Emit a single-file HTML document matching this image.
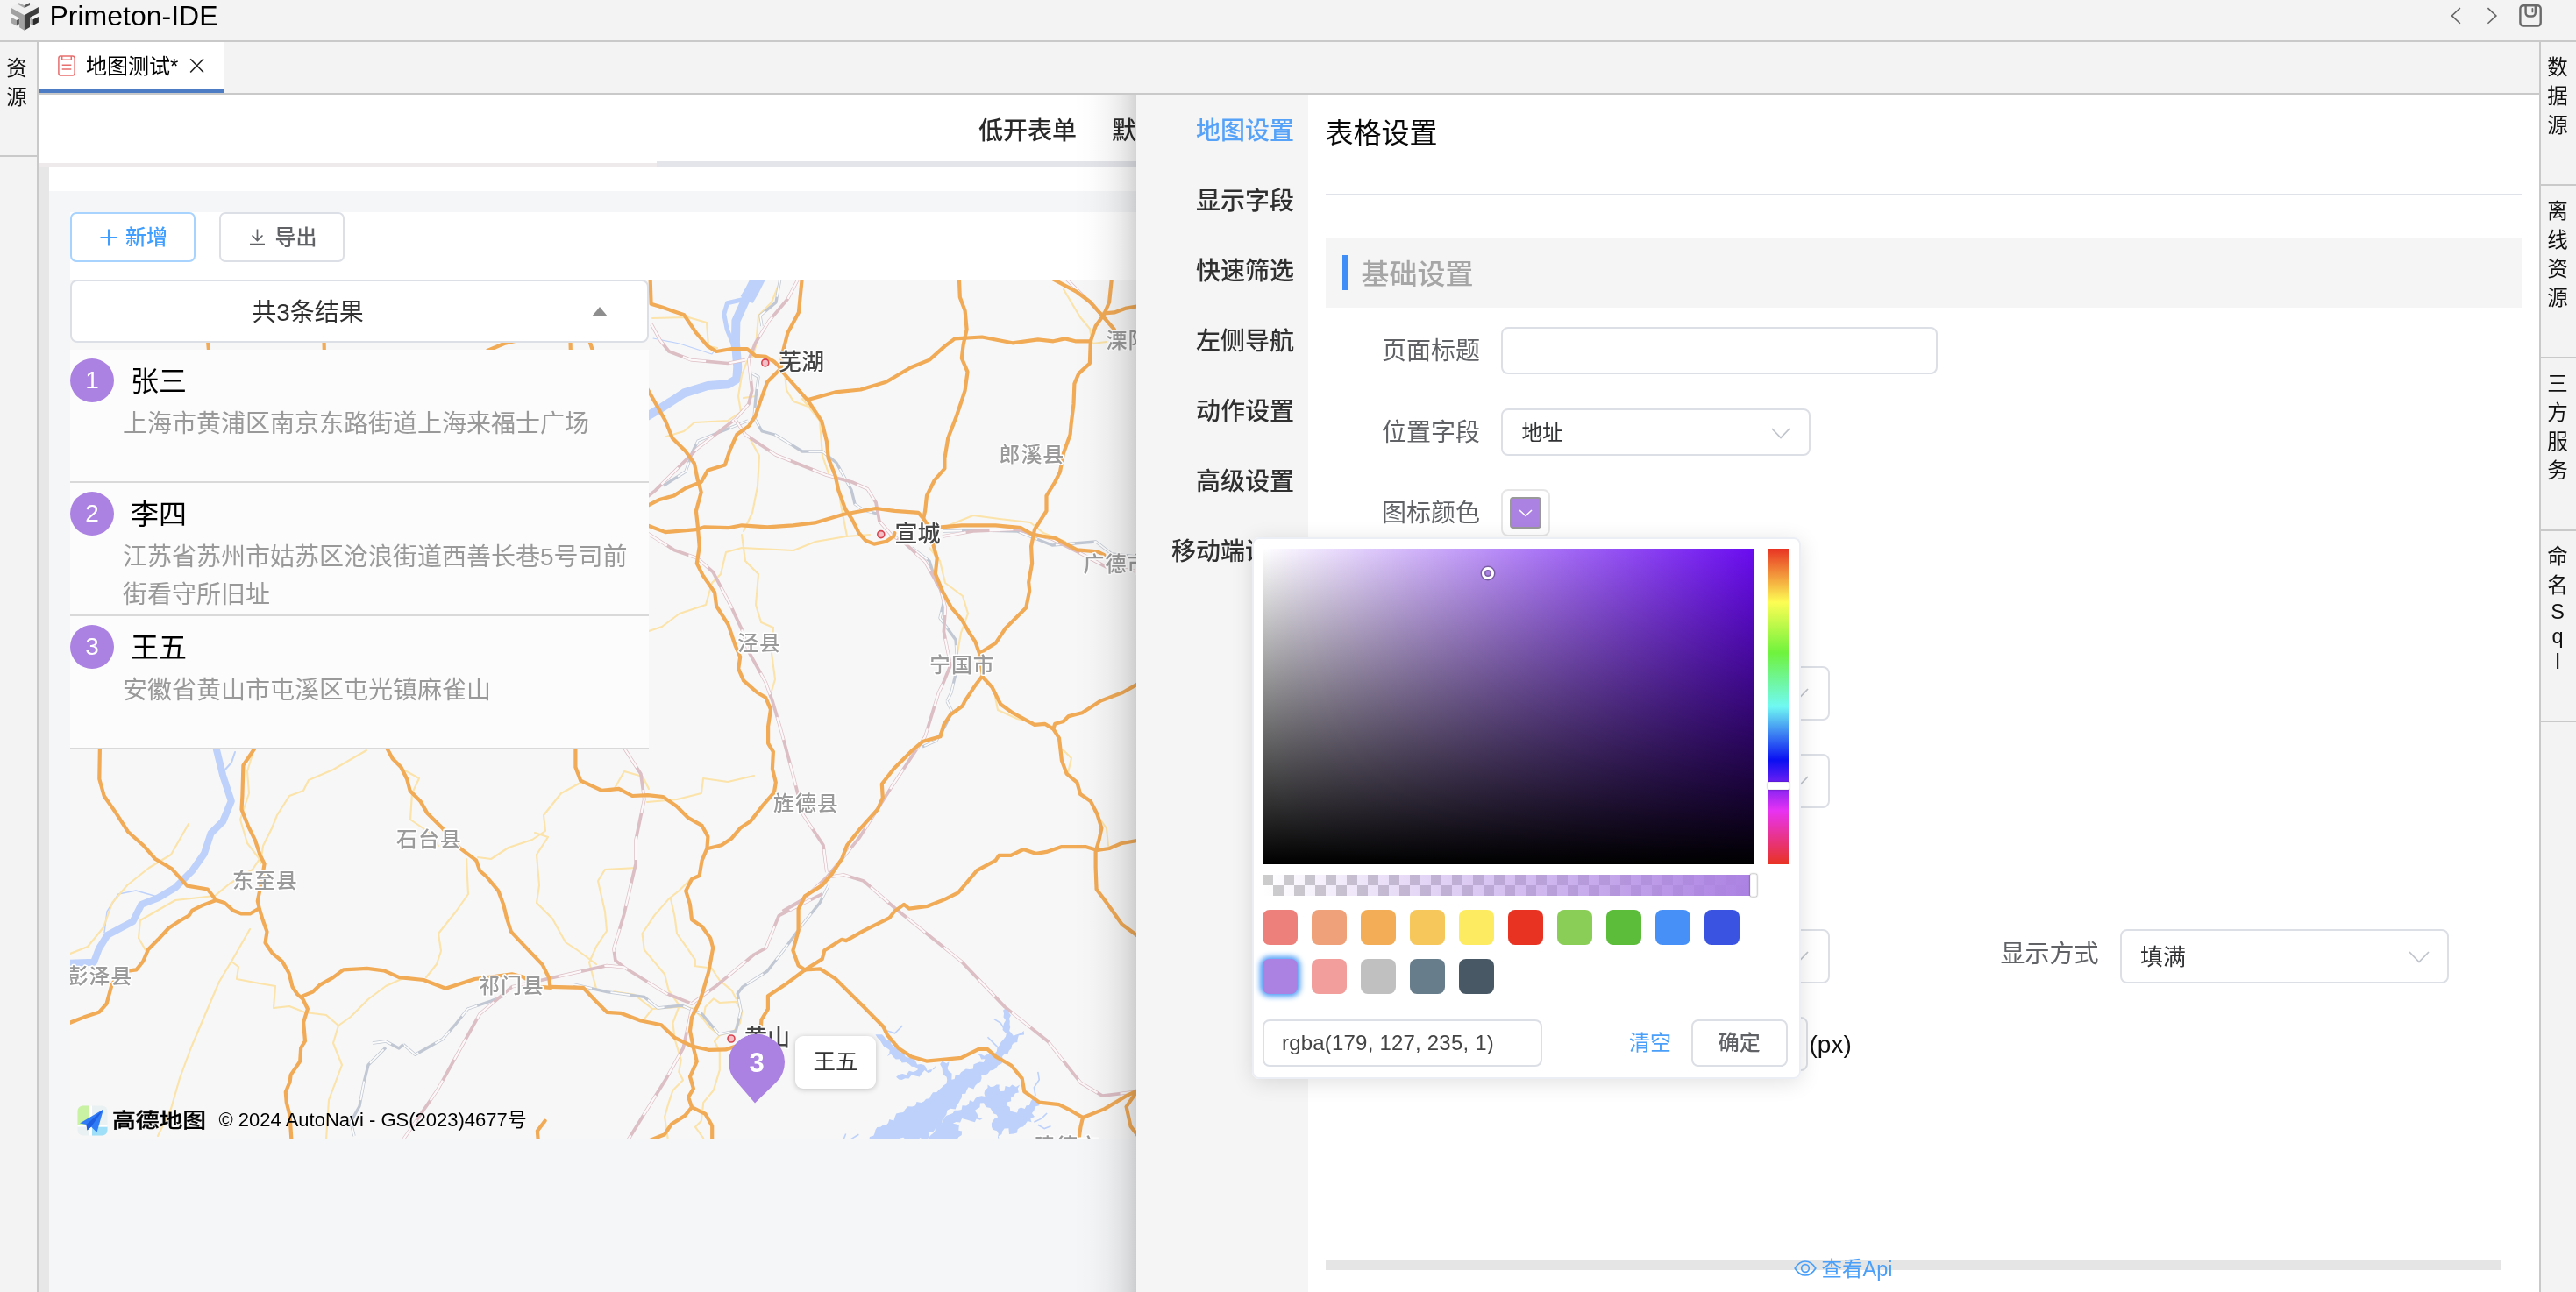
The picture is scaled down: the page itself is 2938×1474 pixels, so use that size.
<!DOCTYPE html>
<html lang="zh-CN">
<head>
<meta charset="utf-8">
<title>Primeton-IDE</title>
<style>
*{box-sizing:border-box;margin:0;padding:0}
html,body{width:2938px;height:1474px;overflow:hidden;background:#f3f3f3}
body{position:relative;font-family:"Liberation Sans","Noto Sans CJK SC",sans-serif;color:#000;-webkit-font-smoothing:antialiased}
#root{position:absolute;left:0;top:0;width:2938px;height:1474px;will-change:transform}
@media (max-width:1600px){html,body{width:1469px;height:737px}#root{transform:scale(.5);transform-origin:0 0}}
.abs{position:absolute}
.t{position:absolute;white-space:nowrap;line-height:1}
/* ---------- IDE chrome ---------- */
#topbar{left:0;top:0;width:2938px;height:46px;background:#f3f3f3}
#topline{left:0;top:46px;width:2938px;height:2px;background:#c9c9c9}
#title{left:56.5px;top:0px;font-size:32px;line-height:36px;color:#000}
#lside{left:0;top:48px;width:42px;height:1426px;background:#f3f3f3}
#lsideline{left:42px;top:48px;width:2px;height:1426px;background:#c9c9c9}
#rside{left:2898px;top:48px;width:40px;height:1426px;background:#f3f3f3}
#rsideline{left:2896px;top:48px;width:2px;height:1426px;background:#c9c9c9}
.vtxt{position:absolute;width:40px;text-align:center;font-size:23.5px;line-height:33px;color:#111}
.hsep{position:absolute;height:2px;background:#c9c9c9}
#tabbar{left:44px;top:48px;width:2852px;height:58px;background:#f3f3f3}
#tab{left:44px;top:48px;width:212px;height:58px;background:#fff}
#tabblue{left:44px;top:102px;width:212px;height:4px;background:#4d7cc4}
#tabline{left:44px;top:106px;width:2852px;height:2px;background:#c9c9c9}
#tabtxt{left:98px;top:62px;font-size:24px;line-height:28px;color:#000}
/* ---------- page ---------- */
#page{left:44px;top:108px;width:2852px;height:1366px;background:#f5f6f8;overflow:hidden}
#phead{left:0;top:0;width:2852px;height:82px;background:#fff}
#pline1{left:0;top:78px;width:706px;height:4px;background:#eeeaeb}
#pline2{left:705px;top:76px;width:2147px;height:6px;background:#e4e5eb}
#pwhite{left:12px;top:82px;width:2840px;height:28px;background:#fff}
#pstrip{left:0;top:82px;width:12px;height:1284px;background:#e7e7e7}
#card{left:36px;top:134px;width:2816px;height:77px;background:#fff}
.btn{position:absolute;top:134px;height:57px;width:143px;border-radius:7px;border:2px solid #dcdfe6;background:#fff;font-size:24px}
#map{left:36px;top:211px;width:1216px;height:981px;overflow:hidden;background:#f7f7f7}
.mapsvg{position:absolute;left:0;top:0}
.or{fill:none;stroke:#f1aa56;stroke-width:4.2;stroke-linejoin:round;stroke-linecap:round}
.yl{fill:none;stroke:#fbe3a9;stroke-width:2.1;stroke-linejoin:round;stroke-linecap:round}
.rl{fill:none;stroke:#dcbec5;stroke-width:3.7;stroke-linejoin:round}
.rld{fill:none;stroke:#fcf8f9;stroke-width:2.3;stroke-dasharray:27 27;stroke-linejoin:round}
.gr{fill:none;stroke:#c1c8d3;stroke-width:3.3;stroke-linejoin:round}
.grd{fill:none;stroke:#fbfbfb;stroke-width:1.8;stroke-dasharray:22 22;stroke-linejoin:round}
.rv{fill:none;stroke:#bdd1fb;stroke-linejoin:round;stroke-linecap:round}
.ml{font-family:"Liberation Sans","Noto Sans CJK SC",sans-serif;font-size:24px;letter-spacing:.9px;font-weight:500;fill:#9a9a9a;stroke:#fff;stroke-width:3px;paint-order:stroke;stroke-linejoin:round}
.mc{font-family:"Liberation Sans","Noto Sans CJK SC",sans-serif;font-size:26px;font-weight:500;fill:#454545;stroke:#fff;stroke-width:3px;paint-order:stroke;stroke-linejoin:round}
#panel{left:36px;top:211px;width:660px;height:72px;background:#fff;border:2px solid #dcdfe6;border-radius:8px}
.item{position:absolute;left:36px;width:660px;height:152px;background:#fcfcfc;border-bottom:2px solid #d9d9d9}
.num{position:absolute;left:0;top:10px;width:50px;height:50px;border-radius:50%;background:#ab81e2;color:#fff;font-size:28px;line-height:50px;text-align:center}
.nm{position:absolute;left:69px;top:16px;font-size:32px;line-height:40px;color:#000;white-space:nowrap}
.ad{position:absolute;left:60px;top:62.5px;width:590px;font-size:28px;line-height:43.5px;color:#999}
/* ---------- drawer ---------- */
#dshadow{left:1224px;top:108px;width:72px;height:1366px;background:linear-gradient(to right,rgba(0,0,0,0) 0%,rgba(0,0,0,.012) 30%,rgba(0,0,0,.04) 55%,rgba(0,0,0,.08) 75%,rgba(0,0,0,.125) 90%,rgba(0,0,0,.17) 100%)}
#drawer{left:1296px;top:108px;width:1600px;height:1366px;background:#fff;overflow:hidden}
#dnav{left:0;top:0;width:196px;height:1366px;background:#f5f5f5}
.nav{position:absolute;margin-top:2px;right:1420px;font-size:28px;line-height:40px;color:#303030;white-space:nowrap;font-weight:500}
#dtitle{left:215.5px;top:23.5px;font-size:32px;line-height:40px;color:#080808}
#dsep{left:216px;top:113px;width:1364px;height:2px;background:#dfe2e8}
#dsec{left:216px;top:163px;width:1364px;height:80px;background:#f5f5f5}
#dsecbar{left:235px;top:183px;width:7px;height:40px;background:#3f8ef7}
#dsectxt{left:256.5px;top:185px;font-size:32px;line-height:40px;color:#a6a6a6;font-weight:500}
.lbl{position:absolute;margin-top:1px;font-size:28px;line-height:40px;color:#606266;white-space:nowrap}
.inp{position:absolute;border:2px solid #dcdfe6;border-radius:8px;background:#fff}
.seltxt{position:absolute;left:21px;top:50%;margin-top:-16px;font-size:23.5px;line-height:34px;color:#303133;white-space:nowrap}
/* ---------- colour picker ---------- */
#cp{left:1428px;top:613px;width:625.5px;height:618px;background:#fff;border-radius:8px;box-shadow:inset 0 0 0 2px #ebeef5,0 4px 24px rgba(0,0,0,.12)}
.sw{position:absolute;width:40px;height:40px;border-radius:8px}
</style>
</head>
<body>
<div id="root">
<!-- ================= IDE chrome ================= -->
<div class="abs" id="topbar"></div>
<div class="abs" id="topline"></div>
<svg class="abs" style="left:6px;top:0" width="46" height="40" viewBox="6 0 46 40">
  <polygon points="12,8.4 21.2,3.6 21.2,5.6 27.7,9 34,5.9 34,3.4 43.9,8.1 27.8,17.3" fill="#efefef"/>
  <polygon points="21.2,3.1 27.7,6.2 27.7,9 21.2,5.6" fill="#a9a9a9"/>
  <polygon points="27.7,6.2 34,2.9 34,5.9 27.7,9" fill="#555"/>
  <polygon points="12,8.4 27.8,17.3 27.8,34.7 22.1,31.3 22.1,20.4 12,14.9" fill="#a1a1a1"/>
  <polygon points="27.8,17.3 43.9,8.1 43.9,14.9 34,20.1 34,31 27.8,34.7" fill="#3d3d3d"/>
  <polygon points="12,19.2 15.3,17.6 21.9,21.4 19,22.9" fill="#f6f6f6"/>
  <polygon points="12,19.2 19,22.9 19,29.4 12,25.7" fill="#a4a4a4"/>
  <polygon points="19,22.9 21.9,21.4 21.9,27.2 19,29.4" fill="#555"/>
  <polygon points="34.3,20.4 40,17.4 43.9,18.9 37.6,22.3" fill="#f6f6f6"/>
  <polygon points="34.3,20.4 37.6,22.3 37.6,29.1 34.3,27.2" fill="#ababab"/>
  <polygon points="37.6,22.3 43.9,18.9 43.9,25.4 37.6,29.1" fill="#2b2b2b"/>
</svg>

<div class="t" id="title">Primeton-IDE</div>
<svg class="abs" style="left:2790px;top:0" width="120" height="40" viewBox="2790 0 120 40" fill="none" stroke-linecap="square">
  <polyline points="2805.3,9.6 2796.4,17.9 2805.3,26.2" stroke="#666" stroke-width="1.6"/>
  <polyline points="2838,9.6 2846.9,17.9 2838,26.2" stroke="#666" stroke-width="1.6"/>
  <rect x="2874.400" y="6.300" width="23.300" height="23.300" rx="3.500" stroke="#6a6a6a" stroke-width="2.400"/>
  <path d="M2880.600 6.500v8a4 4 0 0 0 4 4h3.200a4 4 0 0 0 4-4v-8" stroke="#6a6a6a" stroke-width="2.400" stroke-linecap="butt"/>
  <path d="M2888.400 9.800v3.600" stroke="#6a6a6a" stroke-width="1.800" stroke-linecap="round"/>
</svg>

<div class="abs" id="lside"></div>
<div class="abs" id="lsideline"></div>
<div class="abs" id="rside"></div>
<div class="abs" id="rsideline"></div>
<div class="abs" id="tabbar"></div>
<div class="abs" id="tab"></div>
<div class="abs" id="tabblue"></div>
<div class="abs" id="tabline"></div>
<div class="t" id="tabtxt">地图测试*</div>
<svg class="abs" style="left:60px;top:58px" width="34" height="34" viewBox="60 58 34 34" fill="none" stroke="#e76f6e" stroke-width="1.500">
  <rect x="66.900" y="63.900" width="18.200" height="22.200" rx="2.500"/>
  <path d="M70.700 64v4.200h10.600V64M70.700 74.300h10.600M70.700 78.900h10.600"/>
</svg>
<svg class="abs" style="left:212px;top:62px" width="26" height="26" viewBox="212 62 26 26"><path d="M217.200 67.300l14.800 15.200M232 67.300l-14.800 15.200" stroke="#222" stroke-width="1.600" fill="none"/></svg>

<div class="vtxt" style="left:-1px;top:61.5px">资<br>源</div>
<div class="hsep" style="left:0;top:177px;width:42px"></div>
<div class="vtxt" style="left:2897px;top:61px">数<br>据<br>源</div>
<div class="hsep" style="left:2898px;top:210px;width:40px"></div>
<div class="vtxt" style="left:2897px;top:225px">离<br>线<br>资<br>源</div>
<div class="hsep" style="left:2898px;top:407px;width:40px"></div>
<div class="vtxt" style="left:2897px;top:422px">三<br>方<br>服<br>务</div>
<div class="hsep" style="left:2898px;top:604px;width:40px"></div>
<div class="vtxt" style="left:2897px;top:619px">命<br>名<div style="line-height:28.6px;margin-top:-1.5px">S<br>q<br>l</div></div>
<div class="hsep" style="left:2898px;top:822px;width:40px"></div>
<!-- ================= page ================= -->
<div class="abs" id="page">
<div class="abs" id="phead"></div>
<div class="t" style="left:1072px;top:22px;font-size:28px;line-height:40px;color:#2a2a2a;font-weight:500">低开表单</div>
<div class="t" style="left:1224px;top:22px;font-size:28px;line-height:40px;color:#2a2a2a;font-weight:500">默认</div>
<div class="abs" id="pline1"></div>
<div class="abs" id="pline2"></div>
<div class="abs" id="pwhite"></div>
<div class="abs" id="pstrip"></div>
<div class="abs" id="card"></div>
<div class="btn" style="left:36px;border-color:#a9d3ff">
  <svg class="abs" style="left:32px;top:17px" width="20" height="20" viewBox="0 0 20 20"><path d="M10 0.5v19M0.5 10h19" stroke="#409eff" stroke-width="2" fill="none"/></svg>
  <div class="t" style="left:61px;top:13px;line-height:28px;color:#409eff;font-weight:500">新增</div>
</div>
<div class="btn" style="left:206px">
  <svg class="abs" style="left:32px;top:17px" width="19" height="19" viewBox="0 0 19 19"><path d="M9.5 0.5v12.5M3.5 7.5l6 6 6-6M1 17.6h17" stroke="#606266" stroke-width="1.7" fill="none"/></svg>
  <div class="t" style="left:61.5px;top:13px;line-height:28px;color:#606266;font-weight:500">导出</div>
</div>
<div class="abs" id="map">
<svg class="mapsvg" width="1216" height="981" viewBox="80 319 1216 981">
<rect x="80" y="319" width="1216" height="981" fill="#f7f7f7"/>
<polyline class="rv" style="stroke-width:10" points="863.5,317.0 850.0,342.9 839.4,366.1 838.9,391.3 841.3,418.4 840.3,432.5 830.6,438.2 807.4,440.0 780.3,448.4 755.2,464.8 738.0,475.0"/>
<polyline class="rv" style="stroke-width:16;stroke-linecap:butt" points="866,315 858,331 851.5,342"/>
<polyline class="rv" style="stroke-width:5" points="850,341 829.5,345.8 825.8,358.4 829.2,375.8 835.5,391.3 838.4,402.9"/>
<polyline class="rv" style="stroke-width:1.2" points="745,386 775,392 812,404 816,398"/>
<polyline class="rv" style="stroke-width:8" points="246.4,853.0 254.2,884.8 263.8,913.9 254.2,937.1 240.6,950.6 232.9,973.9 219.3,993.2 200.0,1012.6 180.6,1024.2 161.3,1031.9 151.6,1051.3 122.6,1066.7 112.9,1082.2 107.1,1097.7 78.0,1098.7"/>
<polyline class="rv" style="stroke-width:2" points="268,858 264,870 255,880"/>
<polyline class="rv" style="stroke-width:1.5" points="176,1022 155,1016 135,1020 122,1040 119,1064"/>
<polygon fill="#bdd1fb" points="998.5,1180.3 1002.3,1180.3 1006.0,1180.2 1008.8,1183.2 1010.8,1186.4 1015.8,1186.6 1016.4,1191.1 1019.1,1193.5 1022.3,1195.3 1026.2,1196.3 1027.0,1200.6 1031.5,1200.9 1032.4,1205.3 1035.5,1206.4 1039.4,1205.9 1042.3,1207.5 1044.3,1210.8 1046.2,1214.4 1050.0,1214.1 1054.0,1215.0 1056.1,1217.8 1057.4,1221.5 1061.2,1220.2 1065.5,1219.9 1067.6,1215.6 1064.3,1219.0 1061.8,1222.9 1058.4,1224.0 1054.5,1221.1 1051.5,1224.4 1048.8,1228.4 1044.1,1227.4 1039.7,1226.2 1036.6,1230.5 1032.4,1230.3 1028.6,1231.9 1025.2,1231.6 1022.1,1228.8 1025.2,1226.0 1029.4,1225.1 1033.7,1226.3 1036.9,1221.8 1041.2,1222.9 1044.3,1221.9 1047.1,1220.0 1044.0,1217.3 1039.8,1216.7 1036.8,1214.1 1033.5,1211.9 1028.6,1212.5 1026.5,1208.2 1021.7,1208.6 1018.7,1205.8 1016.2,1202.4 1011.8,1205.3 1014.2,1202.0 1014.7,1197.9 1011.5,1195.8 1008.1,1193.9 1005.9,1190.6 1003.8,1186.9 1000.8,1183.9"/>
<polygon fill="#bdd1fb" points="991.2,1300.6 992.0,1297.1 996.3,1295.8 997.7,1292.6 998.5,1289.1 1000.4,1286.0 1004.3,1285.8 1006.9,1283.7 1010.8,1283.6 1013.1,1281.1 1014.4,1277.0 1019.4,1278.6 1020.6,1274.4 1022.2,1270.4 1026.2,1269.6 1030.3,1269.0 1032.4,1265.6 1035.5,1262.2 1040.2,1262.6 1044.1,1261.2 1045.5,1256.9 1050.6,1258.1 1053.8,1256.6 1056.1,1253.7 1060.1,1253.2 1061.8,1249.4 1064.0,1246.3 1068.4,1245.9 1070.9,1243.2 1073.8,1241.0 1076.3,1238.2 1079.4,1236.2 1080.2,1232.2 1079.7,1228.7 1076.0,1226.3 1075.0,1222.9 1074.5,1218.2 1072.1,1214.1 1074.8,1210.6 1079.3,1213.3 1082.4,1211.2 1082.0,1214.7 1080.4,1218.5 1081.9,1221.7 1085.6,1224.7 1085.5,1228.2 1085.3,1231.8 1088.7,1231.0 1089.8,1225.9 1094.0,1226.5 1096.1,1223.3 1098.9,1221.4 1101.6,1219.4 1105.9,1220.0 1109.7,1219.4 1110.5,1214.2 1113.9,1212.9 1117.3,1211.6 1121.8,1212.1 1123.5,1208.2 1119.2,1208.4 1117.5,1204.6 1114.7,1202.4 1118.6,1202.6 1122.5,1204.7 1126.5,1202.4 1130.4,1203.2 1133.9,1202.5 1136.8,1199.4 1137.4,1195.5 1140.0,1192.5 1141.5,1189.1 1144.1,1186.2 1146.9,1182.8 1147.8,1179.2 1143.5,1174.9 1144.2,1171.2 1145.0,1167.6 1147.1,1164.1 1144.5,1160.6 1145.0,1156.3 1144.1,1152.4 1148.5,1149.4 1148.5,1152.7 1150.9,1155.6 1152.9,1158.5 1151.0,1162.1 1151.8,1165.2 1151.5,1168.5 1152.2,1172.0 1151.1,1176.0 1153.7,1178.8 1155.9,1181.8 1158.9,1180.4 1162.1,1179.5 1165.2,1178.3 1167.6,1175.9 1168.1,1180.5 1161.9,1181.3 1160.7,1185.0 1160.3,1189.1 1156.3,1189.7 1154.2,1192.2 1153.4,1196.2 1150.9,1198.4 1149.6,1201.9 1145.6,1202.4 1143.0,1205.3 1144.2,1210.2 1142.3,1213.5 1138.2,1215.6 1135.9,1218.8 1132.8,1220.8 1129.1,1221.6 1126.8,1224.8 1123.7,1226.8 1119.1,1225.9 1119.6,1230.1 1118.4,1233.7 1114.7,1236.2 1112.2,1238.8 1110.4,1242.5 1104.6,1240.2 1102.6,1243.5 1101.2,1247.7 1097.1,1247.9 1096.9,1251.9 1095.0,1254.9 1093.4,1258.2 1091.2,1261.2 1089.7,1265.5 1083.9,1264.7 1080.4,1266.7 1079.4,1271.5 1077.2,1274.5 1074.8,1277.4 1074.3,1281.8 1071.9,1284.7 1067.6,1286.2 1065.9,1289.3 1063.7,1292.0 1058.9,1292.0 1059.3,1297.2 1057.4,1300.2 1052.9,1300.6 1049.7,1297.9 1046.4,1300.4 1043.2,1302.7 1039.9,1300.3 1036.7,1303.4 1033.4,1300.4 1030.2,1297.7 1026.9,1298.4 1023.7,1299.4 1020.4,1302.0 1017.2,1301.4 1013.9,1302.6 1010.7,1299.0 1007.4,1300.4 1004.2,1298.9 1000.9,1301.6 997.7,1302.2 994.4,1298.7"/>
<polygon fill="#bdd1fb" points="1052.9,1300.6 1057.4,1300.5 1059.4,1297.6 1061.7,1295.1 1064.3,1292.9 1066.5,1290.3 1067.0,1285.8 1070.6,1284.7 1073.4,1282.3 1075.4,1279.2 1076.8,1275.3 1079.5,1272.8 1083.2,1271.5 1086.8,1270.0 1088.6,1266.8 1092.9,1266.7 1096.6,1265.9 1097.5,1261.3 1102.0,1261.6 1104.9,1259.7 1105.9,1255.3 1110.1,1257.1 1112.7,1252.7 1116.1,1251.0 1119.6,1250.2 1123.5,1250.9 1122.5,1247.2 1123.3,1243.9 1126.5,1241.1 1126.5,1237.6 1129.8,1240.0 1133.1,1239.7 1136.4,1237.5 1139.7,1237.6 1139.5,1241.5 1141.2,1245.0 1145.4,1244.7 1146.6,1239.1 1151.6,1240.3 1154.4,1237.6 1158.8,1240.1 1163.2,1237.6 1160.8,1241.8 1161.8,1246.5 1158.0,1247.2 1156.0,1250.5 1152.9,1252.4 1153.2,1256.2 1148.4,1257.5 1148.5,1261.2 1151.7,1262.9 1152.2,1267.4 1155.9,1268.5 1160.1,1269.6 1161.5,1265.0 1164.4,1263.6 1168.8,1265.0 1170.6,1261.2 1174.1,1260.9 1175.6,1256.5 1178.4,1254.8 1182.4,1255.3 1185.7,1257.3 1185.3,1261.2 1180.6,1262.4 1179.4,1267.1 1176.9,1270.0 1180.0,1274.1 1175.3,1276.6 1176.5,1280.3 1172.0,1279.1 1169.5,1282.4 1166.9,1285.5 1163.2,1286.2 1160.6,1288.4 1159.9,1292.6 1155.9,1293.5 1151.0,1294.1 1150.4,1287.2 1145.6,1287.6 1143.3,1290.5 1142.5,1294.1 1138.8,1296.3 1139.7,1300.6 1137.9,1297.6 1138.8,1293.4 1137.1,1290.3 1132.3,1288.8 1131.0,1285.5 1130.9,1281.8 1132.5,1278.4 1134.7,1275.8 1138.2,1274.4 1136.4,1271.5 1132.7,1270.2 1131.2,1267.0 1129.4,1264.1 1124.4,1262.9 1122.1,1258.2 1117.9,1258.6 1117.5,1263.3 1114.5,1265.0 1111.8,1267.1 1114.4,1270.4 1115.9,1274.7 1120.6,1275.9 1117.9,1277.8 1113.6,1276.6 1111.8,1280.3 1108.1,1279.2 1104.5,1277.9 1100.8,1276.9 1097.1,1275.9 1095.1,1280.4 1090.4,1280.1 1086.8,1281.8 1090.6,1282.5 1093.8,1283.9 1093.3,1289.7 1097.1,1290.6 1096.8,1294.9 1093.3,1297.3 1091.2,1300.6 1087.7,1299.2 1084.2,1300.2 1080.7,1301.6 1077.3,1300.5 1073.8,1300.3 1070.3,1298.9 1066.8,1303.0 1063.4,1300.2 1059.9,1302.1 1056.4,1301.9"/>
<polyline fill="none" stroke="#bdd1fb" stroke-width="1.6" points="1176.5,1256.8 1180.9,1249.4 1179.4,1240.6 1185.3,1231.8 1183.8,1222.9"/>
<polyline fill="none" stroke="#bdd1fb" stroke-width="1.6" points="1179.4,1280.3 1188.2,1275.9 1194.1,1270.0"/>
<polyline fill="none" stroke="#bdd1fb" stroke-width="1.6" points="1183.8,1283.2 1191.2,1287.6 1198.5,1284.7"/>
<polyline fill="none" stroke="#bdd1fb" stroke-width="1.6" points="961.8,1300.6 964.7,1293.5"/>
<polyline fill="none" stroke="#bdd1fb" stroke-width="1.6" points="969.1,1300.6 979.4,1294.3"/>
<polyline fill="none" stroke="#bdd1fb" stroke-width="1.6" points="1011.8,1175.9 1020.6,1178.8 1029.4,1170.0"/>
<polyline fill="none" stroke="#bdd1fb" stroke-width="1.6" points="1133.8,1162.6 1141.2,1167.1 1145.6,1174.4"/>
<polyline fill="none" stroke="#bdd1fb" stroke-width="1.6" points="1126.5,1183.2 1133.8,1190.6 1139.7,1196.5"/>
<polyline class="yl" points="80.0,1088.0 100.0,1080.0 118.0,1058.0 128.0,1030.0 145.0,1010.0 170.0,990.0 195.0,975.0 215.0,940.0"/>
<polyline class="yl" points="289.0,857.0 282.0,880.0 284.0,905.0 274.0,935.0 282.0,962.0 296.0,980.0 288.0,992.0 262.0,1008.0 245.0,1022.0 200.0,1027.0 160.0,1050.0 158.0,1070.0 166.0,1084.0"/>
<polyline class="yl" points="418.0,856.0 380.0,878.0 352.0,890.0 346.0,902.0 330.0,908.0 316.0,930.0 310.0,945.0 300.0,965.0 297.0,985.0"/>
<polyline class="yl" points="285.0,1060.0 265.0,1095.0 250.0,1120.0 235.0,1155.0 218.0,1195.0 205.0,1230.0 195.0,1265.0 180.0,1296.0"/>
<polyline class="yl" points="264.0,1097.0 272.0,1103.0 270.0,1117.0 296.0,1122.0 314.0,1125.0 312.0,1150.0 330.0,1148.0 348.0,1155.0 372.0,1158.0 386.0,1170.0 400.0,1160.0 420.0,1140.0 440.0,1125.0 460.0,1116.0"/>
<polyline class="yl" points="386.0,1170.0 380.0,1190.0 390.0,1215.0 375.0,1255.0 372.0,1300.0"/>
<polyline class="yl" points="460.0,878.0 478.0,888.0 470.0,905.0 468.0,935.0 490.0,950.0 500.0,965.0"/>
<polyline class="yl" points="545.0,978.0 560.0,980.0 580.0,967.0 607.0,958.0 622.0,948.0 620.0,930.0 640.0,905.0 662.0,893.0"/>
<polyline class="yl" points="610.0,950.0 625.0,955.0 612.0,975.0 615.0,1010.0 612.0,1030.0 630.0,1048.0 645.0,1075.0 660.0,1085.0 680.0,1100.0"/>
<polyline class="yl" points="532.0,980.0 534.0,1020.0 520.0,1040.0 500.0,1065.0 503.0,1085.0 498.0,1100.0 486.0,1115.0"/>
<polyline class="yl" points="726.0,990.0 690.0,992.0 682.0,1005.0 690.0,1040.0 692.0,1062.0 680.0,1080.0 672.0,1098.0 680.0,1128.0"/>
<polyline class="yl" points="700.0,901.0 712.0,880.0 733.0,886.0 740.0,900.0"/>
<polyline class="yl" points="738.0,915.0 772.0,912.0 800.0,905.0 802.0,888.0 830.0,892.0 860.0,885.0"/>
<polyline class="yl" points="744.0,363.0 785.0,362.0 806.0,368.0 808.0,395.0 818.0,397.0"/>
<polyline class="yl" points="760.0,498.0 780.0,492.0 792.0,482.0 830.0,480.0 845.0,470.0 842.0,452.0 846.0,428.0 852.0,412.0"/>
<polyline class="yl" points="865.0,430.0 862.0,452.0 848.0,454.0"/>
<polyline class="yl" points="890.0,320.0 880.0,345.0 865.0,360.0 862.0,395.0 858.0,408.0"/>
<polyline class="yl" points="895.0,425.0 897.0,445.0 905.0,458.0 925.0,465.0 935.0,478.0"/>
<polyline class="yl" points="915.0,455.0 935.0,480.0 938.0,520.0 945.0,540.0"/>
<polyline class="yl" points="855.0,500.0 866.0,520.0 864.0,555.0 858.0,585.0 848.0,606.0"/>
<polyline class="yl" points="846.0,610.0 850.0,640.0 865.0,655.0 862.0,690.0 868.0,710.0 882.0,716.0 880.0,745.0 884.0,775.0 878.0,795.0"/>
<polyline class="yl" points="740.0,720.0 755.0,715.0 775.0,700.0 805.0,690.0 812.0,665.0 822.0,655.0 828.0,630.0 846.0,625.0 905.0,628.0 930.0,618.0 965.0,612.0 992.0,610.0"/>
<polyline class="yl" points="958.0,570.0 966.0,612.0"/>
<polyline class="yl" points="1073.0,603.0 1110.0,588.0 1140.0,592.0 1175.0,596.0 1190.0,608.0 1215.0,618.0"/>
<polyline class="yl" points="1060.0,625.0 1072.0,640.0 1078.0,665.0 1098.0,680.0 1104.0,700.0 1096.0,722.0 1092.0,745.0"/>
<polyline class="yl" points="1213.0,330.0 1232.0,362.0 1243.0,375.0 1246.0,392.0 1262.0,390.0"/>
<polyline class="yl" points="1135.0,795.0 1138.0,810.0 1160.0,820.0 1178.0,824.0"/>
<polyline class="yl" points="1212.0,855.0 1222.0,865.0 1218.0,882.0"/>
<polyline class="yl" points="1248.0,925.0 1262.0,945.0 1264.0,965.0"/>
<polyline class="yl" points="789.4,1001.2 774.3,1016.3 762.7,1025.6 746.5,1044.1 732.5,1065.0 734.8,1083.6 746.5,1097.6 758.1,1111.5 762.7,1130.1 774.3,1146.3 790.6,1151.0"/>
<polyline class="yl" points="765.0,1025.6 769.7,1046.5 772.0,1065.0 783.6,1081.3 792.9,1095.2 792.9,1102.2 811.5,1104.5 820.8,1118.5 834.7,1130.1 839.4,1139.4"/>
<polyline class="yl" points="804.5,1148.7 813.8,1139.4 820.8,1144.0 839.4,1142.9 846.3,1153.3 844.0,1167.2 837.0,1176.5 820.8,1181.2 809.2,1171.9 802.2,1162.6 804.5,1148.7"/>
<polyline class="yl" points="820.8,1181.2 815.0,1188.2 820.8,1199.8 820.8,1220.7 813.8,1243.9 802.2,1257.8 799.9,1278.7 792.9,1285.7 802.2,1298.5"/>
<polyline class="yl" points="700.0,1131.2 723.2,1134.7 744.1,1151.0 774.3,1148.7 790.6,1151.0 802.2,1162.6"/>
<polyline class="yl" points="744.1,1151.0 734.8,1162.6"/>
<polyline class="yl" points="774.3,1148.7 767.4,1167.2 769.7,1185.8 776.7,1209.1 774.3,1223.0 779.0,1232.3 767.4,1243.9 762.7,1257.8 758.1,1274.1 761.6,1298.5"/>
<polyline class="gr" points="460.0,1191.6 473.5,1203.2 504.5,1185.8 520.0,1168.0 533.5,1151.0 560.0,1142.0 576.1,1135.5"/>
<polyline class="grd" points="460.0,1191.6 473.5,1203.2 504.5,1185.8 520.0,1168.0 533.5,1151.0 560.0,1142.0 576.1,1135.5"/>
<polyline class="gr" points="653.5,1122.9 692.2,1131.6 734.8,1137.4 750.3,1150.0 777.4,1147.1 800.6,1156.8 820.0,1180.0 839.3,1176.1 845.1,1152.9 841.2,1133.5 847.0,1125.8 875.0,1108.0 893.0,1085.0 915.0,1055.0 935.0,1030.0 945.0,1010.0"/>
<polyline class="grd" points="653.5,1122.9 692.2,1131.6 734.8,1137.4 750.3,1150.0 777.4,1147.1 800.6,1156.8 820.0,1180.0 839.3,1176.1 845.1,1152.9 841.2,1133.5 847.0,1125.8 875.0,1108.0 893.0,1085.0 915.0,1055.0 935.0,1030.0 945.0,1010.0"/>
<polyline class="gr" points="890.0,317.0 885.0,345.0 867.0,360.0 869.0,372.0"/>
<polyline class="grd" points="890.0,317.0 885.0,345.0 867.0,360.0 869.0,372.0"/>
<polyline class="gr" points="858.0,426.0 865.0,430.0 862.0,453.0 860.0,476.0 869.0,492.0 884.0,496.0 915.0,515.0 938.0,515.0 954.0,528.0 971.0,559.0 975.0,575.0 985.0,582.0 1000.0,586.0"/>
<polyline class="grd" points="858.0,426.0 865.0,430.0 862.0,453.0 860.0,476.0 869.0,492.0 884.0,496.0 915.0,515.0 938.0,515.0 954.0,528.0 971.0,559.0 975.0,575.0 985.0,582.0 1000.0,586.0"/>
<polyline class="gr" points="853.0,480.0 796.0,503.0 790.0,515.0 782.0,538.0 757.0,554.0"/>
<polyline class="grd" points="853.0,480.0 796.0,503.0 790.0,515.0 782.0,538.0 757.0,554.0"/>
<polyline class="gr" points="1040.0,625.0 1060.0,640.0 1068.0,665.0 1078.0,680.0 1072.0,705.0 1090.0,730.0 1092.0,760.0 1085.0,790.0 1080.0,800.0"/>
<polyline class="grd" points="1040.0,625.0 1060.0,640.0 1068.0,665.0 1078.0,680.0 1072.0,705.0 1090.0,730.0 1092.0,760.0 1085.0,790.0 1080.0,800.0"/>
<polyline class="gr" points="1080.0,800.0 1086.0,812.0 1078.0,828.0 1068.0,845.0 1052.0,852.0"/>
<polyline class="grd" points="1080.0,800.0 1086.0,812.0 1078.0,828.0 1068.0,845.0 1052.0,852.0"/>
<polyline class="gr" points="1075.0,606.0 1120.0,605.0 1160.0,606.0 1200.0,622.0 1250.0,618.0 1268.0,632.0 1298.0,635.0"/>
<polyline class="grd" points="1075.0,606.0 1120.0,605.0 1160.0,606.0 1200.0,622.0 1250.0,618.0 1268.0,632.0 1298.0,635.0"/>
<polyline class="gr" points="425.0,1190.0 440.0,1188.0 455.0,1196.0 460.0,1191.6"/>
<polyline class="grd" points="425.0,1190.0 440.0,1188.0 455.0,1196.0 460.0,1191.6"/>
<polyline class="gr" points="404.0,1296.0 400.0,1280.0 410.0,1262.0 415.0,1235.0 420.0,1215.0 440.0,1195.0"/>
<polyline class="grd" points="404.0,1296.0 400.0,1280.0 410.0,1262.0 415.0,1235.0 420.0,1215.0 440.0,1195.0"/>
<polyline class="rl" points="711.6,853.0 730.9,882.9 734.8,911.9 725.1,958.4 725.1,985.5 711.6,1043.5 700.0,1082.2 701.9,1095.8 711.6,1103.5"/>
<polyline class="rld" points="711.6,853.0 730.9,882.9 734.8,911.9 725.1,958.4 725.1,985.5 711.6,1043.5 700.0,1082.2 701.9,1095.8 711.6,1103.5"/>
<polyline class="rl" points="460.0,1300.0 498.7,1243.8 547.1,1156.8 583.9,1125.8 692.2,1101.6 711.6,1103.5 760.0,1133.5 789.0,1145.1 818.0,1123.9 860.0,1089.0 873.4,1081.7 888.3,1044.6 937.8,1019.8"/>
<polyline class="rld" points="460.0,1300.0 498.7,1243.8 547.1,1156.8 583.9,1125.8 692.2,1101.6 711.6,1103.5 760.0,1133.5 789.0,1145.1 818.0,1123.9 860.0,1089.0 873.4,1081.7 888.3,1044.6 937.8,1019.8"/>
<polyline class="rl" points="789.0,1151.0 779.3,1195.5 760.0,1230.3 715.4,1302.0"/>
<polyline class="rld" points="789.0,1151.0 779.3,1195.5 760.0,1230.3 715.4,1302.0"/>
<polyline class="rl" points="743.0,370.0 752.8,388.0 763.0,401.0 788.0,410.6 830.0,414.5 850.0,410.6"/>
<polyline class="rld" points="743.0,370.0 752.8,388.0 763.0,401.0 788.0,410.6 830.0,414.5 850.0,410.6"/>
<polyline class="rl" points="911.0,317.0 898.4,341.0 877.1,366.1 861.6,391.3 853.9,410.6 857.7,445.5 853.9,461.0 838.4,478.4 795.8,511.3 747.4,559.6 738.0,567.0"/>
<polyline class="rld" points="911.0,317.0 898.4,341.0 877.1,366.1 861.6,391.3 853.9,410.6 857.7,445.5 853.9,461.0 838.4,478.4 795.8,511.3 747.4,559.6 738.0,567.0"/>
<polyline class="rl" points="838.4,478.4 850.0,495.8 884.8,519.0 942.9,542.2 971.9,550.0 989.3,557.7 999.0,573.2 1002.9,594.5 1016.4,610.0 1031.9,619.7 1055.1,641.0 1072.5,671.9 1078.3,693.2 1076.4,720.3 1084.1,759.0 1074.5,782.2 1070.6,790.0 1055.1,840.3 1016.4,898.4 979.6,956.4 942.9,1000.9 915.8,1026.1 892.5,1039.6"/>
<polyline class="rld" points="838.4,478.4 850.0,495.8 884.8,519.0 942.9,542.2 971.9,550.0 989.3,557.7 999.0,573.2 1002.9,594.5 1016.4,610.0 1031.9,619.7 1055.1,641.0 1072.5,671.9 1078.3,693.2 1076.4,720.3 1084.1,759.0 1074.5,782.2 1070.6,790.0 1055.1,840.3 1016.4,898.4 979.6,956.4 942.9,1000.9 915.8,1026.1 892.5,1039.6"/>
<polyline class="rl" points="738.0,608.0 768.7,627.4 795.8,637.1 813.2,652.6 832.6,689.3 846.1,718.4 853.9,743.5 873.2,778.4 880.9,799.6 890.6,832.6 904.2,882.9 915.8,929.3 939.0,964.2 942.9,995.1"/>
<polyline class="rld" points="738.0,608.0 768.7,627.4 795.8,637.1 813.2,652.6 832.6,689.3 846.1,718.4 853.9,743.5 873.2,778.4 880.9,799.6 890.6,832.6 904.2,882.9 915.8,929.3 939.0,964.2 942.9,995.1"/>
<polyline class="rl" points="942.9,1000.9 962.2,998.0 984.9,1005.0 1022.0,1037.2 1096.3,1096.6 1145.9,1148.6 1195.4,1188.3 1232.6,1235.3 1257.3,1250.2 1298.0,1245.2"/>
<polyline class="rld" points="942.9,1000.9 962.2,998.0 984.9,1005.0 1022.0,1037.2 1096.3,1096.6 1145.9,1148.6 1195.4,1188.3 1232.6,1235.3 1257.3,1250.2 1298.0,1245.2"/>
<polyline class="rl" points="1075.0,612.0 1110.0,606.0 1160.0,604.0 1200.0,615.0 1230.0,630.0 1262.0,647.0 1298.0,652.0"/>
<polyline class="rld" points="1075.0,612.0 1110.0,606.0 1160.0,604.0 1200.0,615.0 1230.0,630.0 1262.0,647.0 1298.0,652.0"/>
<polyline class="rl" points="1215.0,317.0 1245.0,347.0 1262.0,365.0"/>
<polyline class="rld" points="1215.0,317.0 1245.0,347.0 1262.0,365.0"/>
<polyline class="or" points="113.9,853.0 113.3,888.7 118.7,908.0 132.2,927.4 145.8,948.7 163.2,964.2 176.8,979.7 196.1,991.3 213.5,1010.6 236.8,1014.5 246.4,1027.0 256.1,1030.0 265.8,1038.7 275.5,1042.5 285.1,1042.5 294.8,1036.7"/>
<polyline class="or" points="291.0,853.0 277.4,873.2 276.4,908.0 275.5,923.5 283.2,942.9 290.9,958.4 296.7,975.8 301.6,985.5 297.7,1008.7 293.8,1028.0 295.8,1036.7 299.6,1049.3 304.5,1062.9 302.5,1075.5 310.3,1087.1 321.9,1096.8 329.6,1110.3 333.5,1125.8 339.3,1134.5 345.1,1139.3 350.9,1151.0 346.1,1166.4 348.0,1187.7 343.2,1195.5 342.2,1210.9 331.6,1226.4 330.6,1234.2 325.8,1245.8 326.7,1257.4 330.6,1272.9 332.5,1302.0"/>
<polyline class="or" points="246.4,1027.0 230.9,1032.9 219.3,1038.7 215.5,1044.5 203.9,1051.3 192.2,1059.0 180.6,1071.6 169.0,1083.2 163.2,1096.8 155.5,1106.4 147.7,1107.4 135.0,1112.0 127.4,1123.9 121.6,1145.1 112.9,1154.8 95.5,1160.6 78.0,1167.4"/>
<polyline class="or" points="441.0,853.0 447.7,865.5 457.4,875.2 464.1,888.7 467.7,902.2 479.4,913.9 487.1,927.4 504.5,944.8 523.9,967.1 543.2,981.6 547.1,993.2 554.8,1000.0 568.4,1016.4 574.2,1031.9 578.0,1047.4 582.9,1062.9 595.5,1076.4 618.7,1100.6 626.4,1116.1 627.4,1125.8"/>
<polyline class="or" points="345.1,1136.4 356.7,1131.6 364.5,1123.9 380.0,1115.2 391.6,1106.4 418.7,1104.9 438.0,1107.4 455.4,1115.2 483.2,1118.0 508.4,1127.7 541.3,1117.0 583.9,1111.3 595.5,1114.2 616.0,1125.8 628.4,1126.8"/>
<polyline class="or" points="656.4,853.0 656.4,875.2 662.2,890.6 686.4,901.9 705.8,899.9 721.2,908.0 738.7,907.1 756.1,909.0 771.6,919.7 785.1,933.2 800.6,941.9 807.4,954.5 806.4,968.0 800.6,981.6 797.7,999.0 789.0,1002.9 782.2,1016.4 787.0,1031.9 789.0,1049.3 800.6,1057.1 810.3,1070.6 813.2,1081.3 808.3,1108.4 798.7,1141.3 789.0,1160.6 787.0,1176.1 790.9,1195.5 794.8,1210.9 787.0,1228.4 790.9,1241.9 785.1,1251.6 789.0,1263.2 781.2,1272.9 765.8,1282.5 758.0,1294.2 738.7,1302.0"/>
<polyline class="or" points="807.4,968.0 822.9,964.2 834.5,956.4 844.2,944.8 855.8,937.1 869.3,919.7 882.9,904.2 884.8,892.6 880.9,877.1 881.9,857.7 876.1,848.1 876.1,828.7 879.0,809.4 873.2,795.8 863.5,790.0 848.0,776.4 842.2,762.9 844.2,749.3 838.4,735.8 830.6,712.6 817.1,691.3 815.1,675.8 801.6,656.4 794.8,642.9 797.7,623.5 795.8,600.3 793.9,582.9 799.7,561.6 796.8,550.0 795.8,548.0 791.9,528.7 782.2,515.1 766.8,499.7 759.0,480.3 738.0,443.0"/>
<polyline class="or" points="627.4,1125.8 665.1,1126.8 678.7,1141.3 692.2,1154.8 707.7,1155.8 730.9,1164.5 754.2,1169.3 769.6,1183.9 789.0,1193.5 808.3,1197.8 827.7,1197.4 839.3,1193.5"/>
<polyline class="or" points="789.0,1263.2 804.5,1270.9 812.2,1284.5 812.2,1302.0"/>
<polyline class="or" points="621.6,1278.7 612.9,1290.3 613.8,1302.0"/>
<polyline class="or" points="741.6,317.0 742.6,346.8 755.2,350.6 780.3,359.3 793.9,379.7 807.4,395.1 817.1,401.0 834.5,398.0 851.9,398.0 861.6,405.8 873.2,406.8 882.9,412.6 890.6,420.3"/>
<polyline class="or" points="914.8,317.0 910.9,356.4 898.4,379.7 892.5,402.9 890.6,422.0 904.2,437.7 921.6,457.1 937.1,480.3 942.9,503.5 944.8,522.9 952.5,542.2 956.4,559.7 964.2,581.0 971.9,592.6 979.6,608.1 987.4,616.8 997.0,620.6 1010.6,617.7 1019.3,611.9 1020.3,608.1"/>
<polyline class="or" points="888.7,422.2 875.1,435.8 867.4,457.1 861.6,474.5 853.9,486.1 840.3,495.8 832.6,513.2 826.8,530.6 807.4,536.4 799.7,550.0 782.2,556.8 768.7,565.5 751.3,570.3 738.0,577.1"/>
<polyline class="or" points="921.6,456.1 952.5,447.4 981.6,444.5 1010.6,435.8 1038.7,419.3 1060.0,410.6 1077.4,395.1 1089.0,386.4 1120.0,384.5 1154.8,391.3 1183.8,387.4 1201.3,389.3 1214.8,386.4 1226.4,389.3 1243.8,389.3"/>
<polyline class="or" points="1093.9,317.0 1094.8,339.0 1100.6,354.5 1102.6,375.8 1098.7,393.2 1096.8,408.7 1103.5,424.2 1100.6,445.5 1096.8,457.1 1091.0,474.5 1081.3,499.7 1077.4,522.9 1077.4,534.5 1065.8,548.0 1057.0,565.5 1055.1,582.9 1053.2,591.6 1060.0,602.0 1063.9,619.7 1068.7,637.1 1066.8,654.5 1075.5,675.8 1085.1,693.2 1096.8,706.8 1104.5,720.3 1112.2,731.9 1117.1,745.5 1120.9,770.6 1112.2,782.2 1100.6,799.6 1097.7,805.5 1084.1,815.2 1076.4,826.8 1072.5,840.3 1052.2,846.1 1038.7,857.7 1019.4,877.1 1005.8,894.5 1006.8,910.0 1000.9,923.5 981.6,944.8 966.1,964.2 960.3,979.6 948.7,997.1 937.8,1009.9 918.0,1022.3 910.6,1037.2 910.6,1061.9 904.4,1084.2 910.6,1101.6 918.0,1106.5"/>
<polyline class="or" points="1268.0,317.0 1265.1,344.8 1259.3,358.4 1249.6,371.9 1243.8,389.3 1242.9,414.5 1230.3,426.1 1225.4,437.7 1224.5,460.9 1221.6,484.2 1220.6,495.8 1212.9,517.1 1209.0,538.4 1203.2,550.0 1193.5,565.5 1193.5,582.9 1180.0,604.2 1176.1,623.5 1177.1,642.9 1173.2,664.2 1174.2,673.9 1170.3,693.2 1147.1,716.4 1135.5,733.8 1120.0,743.5"/>
<polyline class="or" points="1198.4,317.0 1228.4,333.2 1243.8,344.8 1257.4,360.3 1270.9,375.8"/>
<polyline class="or" points="1259.3,357.4 1270.9,356.4 1284.5,351.6 1300.0,349.0"/>
<polyline class="or" points="738.0,599.3 759.0,607.1 793.9,604.2 803.5,601.3 830.6,602.2 846.1,599.3 875.1,601.3 904.2,599.3 929.3,596.4 962.2,586.8 999.0,580.0 1020.3,582.9 1047.4,584.8 1053.2,591.6"/>
<polyline class="or" points="1073.5,601.3 1096.8,599.3 1135.5,599.3 1164.5,602.2 1178.0,610.0 1203.2,613.9 1228.4,627.4 1251.6,629.3 1259.3,633.2"/>
<polyline class="or" points="1120.9,772.5 1131.6,784.2 1139.3,799.6 1141.3,803.5 1154.8,813.2 1180.0,826.8 1191.6,825.8 1201.3,831.6 1208.0,842.2 1210.9,867.4 1216.7,882.9 1228.4,892.6 1232.2,906.1 1243.8,913.9 1251.6,929.3 1256.4,944.8 1253.5,958.4 1249.6,971.9 1249.6,989.3 1250.6,1014.5 1259.3,1026.1 1269.0,1039.6 1279.6,1054.5 1298.0,1068.0"/>
<polyline class="or" points="1300.0,779.0 1280.6,790.0 1255.4,799.6 1234.2,813.2 1218.7,817.1 1212.9,822.9 1203.2,825.8 1201.3,831.6"/>
<polyline class="or" points="1020.3,1039.6 1031.0,1031.9 1036.8,1036.7 1058.0,1033.8 1077.4,1026.1 1092.9,1018.4 1114.2,993.2 1135.5,981.6 1139.3,975.8 1152.9,975.8 1167.4,969.0 1181.9,973.9 1193.5,971.9 1210.9,966.1 1238.0,966.1 1251.6,970.0 1265.1,968.0 1278.7,962.2 1300.0,958.5"/>
<polyline class="or" points="918.0,1106.5 898.2,1121.4 875.9,1136.2 875.9,1151.1 868.4,1163.5 867.2,1180.0"/>
<polyline class="or" points="918.0,1106.5 937.8,1094.1 940.3,1084.2 960.1,1071.8 965.0,1073.1 984.9,1061.9 1014.6,1047.1 1020.3,1039.6"/>
<polyline class="or" points="918.0,1106.5 935.3,1105.3 952.7,1116.4 967.5,1131.3 984.9,1148.6 1007.2,1170.9 1012.1,1180.8 1024.5,1195.7 1039.4,1205.6 1056.7,1210.6 1096.3,1206.8 1116.2,1196.9 1126.1,1196.9 1136.0,1205.6 1153.3,1215.5 1165.7,1230.4 1168.2,1245.2 1185.5,1257.6 1207.8,1260.1 1220.2,1266.3 1235.0,1275.0 1259.8,1265.1 1284.6,1250.2 1300.0,1243.0"/>
<polyline class="or" points="1235.0,1275.0 1232.6,1284.9 1230.1,1302.0"/>
<polyline class="or" points="1296.0,1246.0 1284.6,1262.6 1289.5,1284.9 1298.0,1296.0"/>
<polyline class="or" points="237.0,388.0 238.0,400.0"/>
<polyline class="or" points="369.5,388.0 369.8,400.0"/>
<polyline class="or" points="556.0,400.0 575.0,392.0 592.0,388.0"/>
<polyline class="or" points="650.5,388.0 650.8,400.0"/>
<polyline class="or" points="672.0,388.0 676.0,400.0"/>
<text class="ml" x="265" y="1012.5">东至县</text>
<text class="ml" x="452" y="966">石台县</text>
<text class="ml" x="76.5" y="1122">彭泽县</text>
<text class="ml" x="546" y="1132.5">祁门县</text>
<text class="ml" x="1139.5" y="526.5">郎溪县</text>
<text class="ml" x="1261.5" y="397">溧阳市</text>
<text class="ml" x="841" y="741.5">泾县</text>
<text class="ml" x="1060" y="767">宁国市</text>
<text class="ml" x="1235.5" y="651.5">广德市</text>
<text class="ml" x="882" y="924.5">旌德县</text>
<text class="ml" x="1180" y="1316">建德市</text>
<text class="mc" x="888" y="422">芜湖</text>
<text class="mc" x="1020.5" y="617.5">宣城</text>
<text class="mc" x="849" y="1192.5">黄山</text>
<circle cx="872.8" cy="413.9" r="4" fill="#f3c0c8" stroke="#d9434f" stroke-width="1.6"/>
<circle cx="1004.8" cy="609.6" r="4" fill="#f3c0c8" stroke="#d9434f" stroke-width="1.6"/>
<circle cx="834" cy="1185" r="4" fill="#f3c0c8" stroke="#d9434f" stroke-width="1.6"/>
</svg>
  <!-- amap logo -->
  <svg class="abs" style="left:7.5px;top:941.500px" width="35" height="35" viewBox="0 0 35 35">
    <rect x="0.5" y="0.5" width="34" height="34" rx="6" fill="#e9f1f3"/>
    <path d="M0.5 6.5a6 6 0 0 1 6-6H14v21.500H0.5z" fill="#c9f2a3"/>
    <path d="M17 24.500h17.500v4a6 6 0 0 1-6 6H17z" fill="#9fe0f8"/>
    <path d="M13.5 0.5h3.500v34h-3.500z" fill="#fff"/><path d="M0.5 22h34v2.600h-34z" fill="#fff"/>
    <path d="M3 20.5L30 4.5 22.5 31 16 24.5l-4.5 4-1-6.5z" fill="#2f7cf6"/>
    <path d="M10.5 22L30 4.5 16 24.5l-4.5 4z" fill="#1f5ee0"/>
  </svg>
  <div class="t" style="left:48px;top:944.5px;font-size:22.5px;line-height:30px;font-weight:500;color:#000;transform:scaleX(1.19);transform-origin:0 50%;-webkit-text-stroke:.35px #000">高德地图</div>
  <div class="t" style="left:169.5px;top:945px;font-size:22px;line-height:28px;color:#000">© 2024 AutoNavi - GS(2023)4677号</div>
  <!-- marker -->
  <svg class="abs" style="left:748px;top:860px" width="70" height="82" viewBox="0 0 70 82">
    <path d="M33 79.5L12.2 55.3A32 32 0 1 1 57.8 55.3z" fill="#ab81e2"/>
  </svg>
  <div class="t" style="left:748px;top:876px;width:70px;text-align:center;font-size:31px;line-height:36px;font-weight:700;color:#fff">3</div>
  <div class="abs" style="left:827px;top:862.5px;width:92px;height:60.5px;background:#fff;border-radius:9px;box-shadow:0 1px 6px rgba(0,0,0,.22)"></div>
  <div class="t" style="left:827px;top:872.3px;width:92px;text-align:center;font-size:25.5px;line-height:40px;color:#333">王五</div>
</div>
<div class="abs" id="panel"></div>
<div class="t" style="left:240px;top:228.5px;width:134px;text-align:center;font-size:28px;line-height:40px;color:#303030">共3条结果</div>
<svg class="abs" style="left:631px;top:242px" width="18" height="11" viewBox="0 0 18 11"><path d="M9 0L18 11H0z" fill="#8e8e8e"/></svg>
<div class="item" style="top:291px"><div class="num">1</div><div class="nm">张三</div><div class="ad">上海市黄浦区南京东路街道上海来福士广场</div></div>
<div class="item" style="top:443px"><div class="num">2</div><div class="nm">李四</div><div class="ad">江苏省苏州市姑苏区沧浪街道西善长巷5号司前街看守所旧址</div></div>
<div class="item" style="top:595px"><div class="num">3</div><div class="nm">王五</div><div class="ad">安徽省黄山市屯溪区屯光镇麻雀山</div></div>

</div>
<!-- ================= drawer ================= -->
<div class="abs" id="dshadow"></div>
<div class="abs" id="drawer">
<div class="abs" id="dnav"></div>
<div class="nav" style="top:20px;color:#55a2f8">地图设置</div>
<div class="nav" style="top:100px">显示字段</div>
<div class="nav" style="top:180px">快速筛选</div>
<div class="nav" style="top:260px">左侧导航</div>
<div class="nav" style="top:340px">动作设置</div>
<div class="nav" style="top:420px">高级设置</div>
<div class="nav" style="top:500px">移动端设置</div>
<div class="t" id="dtitle">表格设置</div>
<div class="abs" id="dsep"></div>
<div class="abs" id="dsec"></div>
<div class="abs" id="dsecbar"></div>
<div class="t" id="dsectxt">基础设置</div>
<div class="lbl" style="left:280px;top:271.5px">页面标题</div>
<div class="inp" style="left:416.4px;top:264.6px;width:498px;height:54.7px"></div>
<div class="lbl" style="left:280px;top:364.5px">位置字段</div>
<div class="inp" style="left:416.4px;top:357.8px;width:353px;height:54.4px">
  <div class="seltxt">地址</div>
  <svg class="abs" style="left:306px;top:20px" width="22" height="13" viewBox="0 0 22 13"><path d="M1 1l10 10.5L21 1" stroke="#c0c4cc" stroke-width="1.8" fill="none"/></svg>
</div>
<div class="lbl" style="left:280px;top:457px">图标颜色</div>
<div class="inp" style="left:416.4px;top:449.5px;width:56px;height:54.5px;border-color:#e6e6e6">
  <div class="abs" style="left:8px;top:7.5px;width:35.5px;height:35.5px;border-radius:4px;background:#ab81e2;border:2px solid #999"></div>
  <svg class="abs" style="left:18px;top:21px" width="16" height="9" viewBox="0 0 16 9"><path d="M1 1l7 6.5L15 1" stroke="#fff" stroke-width="1.6" fill="none"/></svg>
</div>
<!-- rows partly hidden behind the colour dropdown -->
<div class="inp" style="left:415px;top:651.6px;width:376px;height:62.6px"><svg class="abs" style="left:326px;top:23px" width="24" height="14" viewBox="0 0 24 14"><path d="M1 1l11 11.5L23 1" stroke="#c0c4cc" stroke-width="1.8" fill="none"/></svg></div>
<div class="inp" style="left:415px;top:751.7px;width:376px;height:62.6px"><svg class="abs" style="left:326px;top:23px" width="24" height="14" viewBox="0 0 24 14"><path d="M1 1l11 11.5L23 1" stroke="#c0c4cc" stroke-width="1.8" fill="none"/></svg></div>
<div class="inp" style="left:415px;top:951.8px;width:376px;height:62.6px"><svg class="abs" style="left:326px;top:23px" width="24" height="14" viewBox="0 0 24 14"><path d="M1 1l11 11.5L23 1" stroke="#c0c4cc" stroke-width="1.8" fill="none"/></svg></div>
<div class="inp" style="left:415px;top:1051.8px;width:351.3px;height:62.6px"></div>
<div class="t" style="left:767.5px;top:1064px;font-size:28px;line-height:40px;color:#111">(px)</div>
<div class="lbl" style="left:985.5px;top:959.5px">显示方式</div>
<div class="inp" style="left:1122px;top:951.8px;width:374.7px;height:62.6px">
  <div class="t" style="left:21px;top:12px;font-size:26px;line-height:36px;color:#303133">填满</div>
  <svg class="abs" style="left:326.5px;top:23px" width="24" height="14" viewBox="0 0 24 14"><path d="M1 1l11 11.5L23 1" stroke="#c0c4cc" stroke-width="1.8" fill="none"/></svg>
</div>
<div class="abs" style="left:215.7px;top:1329px;width:1340px;height:11.6px;background:#e5e5e5"></div>
<svg class="abs" style="left:750px;top:1330px" width="26" height="18" viewBox="0 0 26 18"><path d="M1.2 9C4.5 3.6 8.5 1 13 1s8.500 2.600 11.800 8C21.500 14.400 17.500 17 13 17S4.500 14.400 1.200 9z" stroke="#4a9ff9" stroke-width="1.7" fill="none"/><circle cx="13" cy="9" r="4.300" stroke="#4a9ff9" stroke-width="1.700" fill="none"/></svg>
<div class="t" style="left:781.5px;top:1325px;font-size:23.5px;line-height:30px;color:#4a9ff9">查看Api</div>

</div>
<!-- ================= colour picker ================= -->
<div class="abs" id="cp">
<div class="abs" style="left:12px;top:13px;width:560px;height:360px;background:linear-gradient(to top,#000,rgba(0,0,0,0)),linear-gradient(to right,#fff,rgba(255,255,255,0)),#6a0cf0"></div>
<div class="abs" style="left:261.5px;top:33.500px;width:14px;height:14px;border-radius:50%;border:3px solid #fff;box-shadow:0 0 0 1.5px rgba(0,0,0,.3),inset 0 0 1px 1.5px rgba(0,0,0,.3)"></div>
<div class="abs" style="left:588px;top:13px;width:24px;height:360px;background:linear-gradient(to bottom,#e83323 0%,#fdfd54 17%,#6ff33d 33%,#70f9f3 50%,#0a0ff2 67%,#e833f3 83%,#e83323 100%)"></div>
<div class="abs" style="left:587.5px;top:279px;width:25px;height:8.500px;background:#fff;border:1px solid #f0f0f0;border-radius:2px;box-shadow:0 0 2px rgba(0,0,0,.45)"></div>
<div class="abs" style="left:12px;top:385px;width:560px;height:24px;background:linear-gradient(to right,rgba(171,129,226,0) 0%,rgba(171,129,226,1) 100%),repeating-conic-gradient(#fff 0% 25%,#ccc 0% 50%) 0 0/24px 24px"></div>
<div class="abs" style="left:567.5px;top:384px;width:8.500px;height:26px;background:#fff;border:1px solid #f0f0f0;border-radius:2px;box-shadow:0 0 2px rgba(0,0,0,.6)"></div>
<div class="sw" style="left:12px;top:425px;background:#ee807b"></div>
<div class="sw" style="left:68px;top:425px;background:#efa27a"></div>
<div class="sw" style="left:124px;top:425px;background:#f2ad56"></div>
<div class="sw" style="left:180px;top:425px;background:#f6c75b"></div>
<div class="sw" style="left:236px;top:425px;background:#fdec61"></div>
<div class="sw" style="left:292px;top:425px;background:#e83323"></div>
<div class="sw" style="left:348px;top:425px;background:#8bce57"></div>
<div class="sw" style="left:404px;top:425px;background:#5bbd39"></div>
<div class="sw" style="left:460px;top:425px;background:#4690f7"></div>
<div class="sw" style="left:516px;top:425px;background:#3a54e1"></div>
<div class="sw" style="left:12px;top:481px;background:#ab81e2;box-shadow:0 0 6px 3px #4b9cf8"></div>
<div class="sw" style="left:68px;top:481px;background:#f19e9c"></div>
<div class="sw" style="left:124px;top:481px;background:#c0c0c0"></div>
<div class="sw" style="left:180px;top:481px;background:#687d8b"></div>
<div class="sw" style="left:236px;top:481px;background:#485965"></div>
<div class="inp" style="left:12.4px;top:549.700px;width:319px;height:54.700px"></div>
<div class="t" style="left:34px;top:560px;font-size:24px;line-height:34px;color:#444;letter-spacing:.2px">rgba(179, 127, 235, 1)</div>
<div class="t" style="left:430px;top:560px;font-size:24px;line-height:34px;color:#4a9ff9">清空</div>
<div class="inp" style="left:500.600px;top:549.700px;width:110.400px;height:54.700px"></div>
<div class="t" style="left:500.600px;top:560px;width:110.400px;text-align:center;font-size:24px;line-height:34px;color:#606266;font-weight:500">确定</div>

</div>
</div>
</body>
</html>
